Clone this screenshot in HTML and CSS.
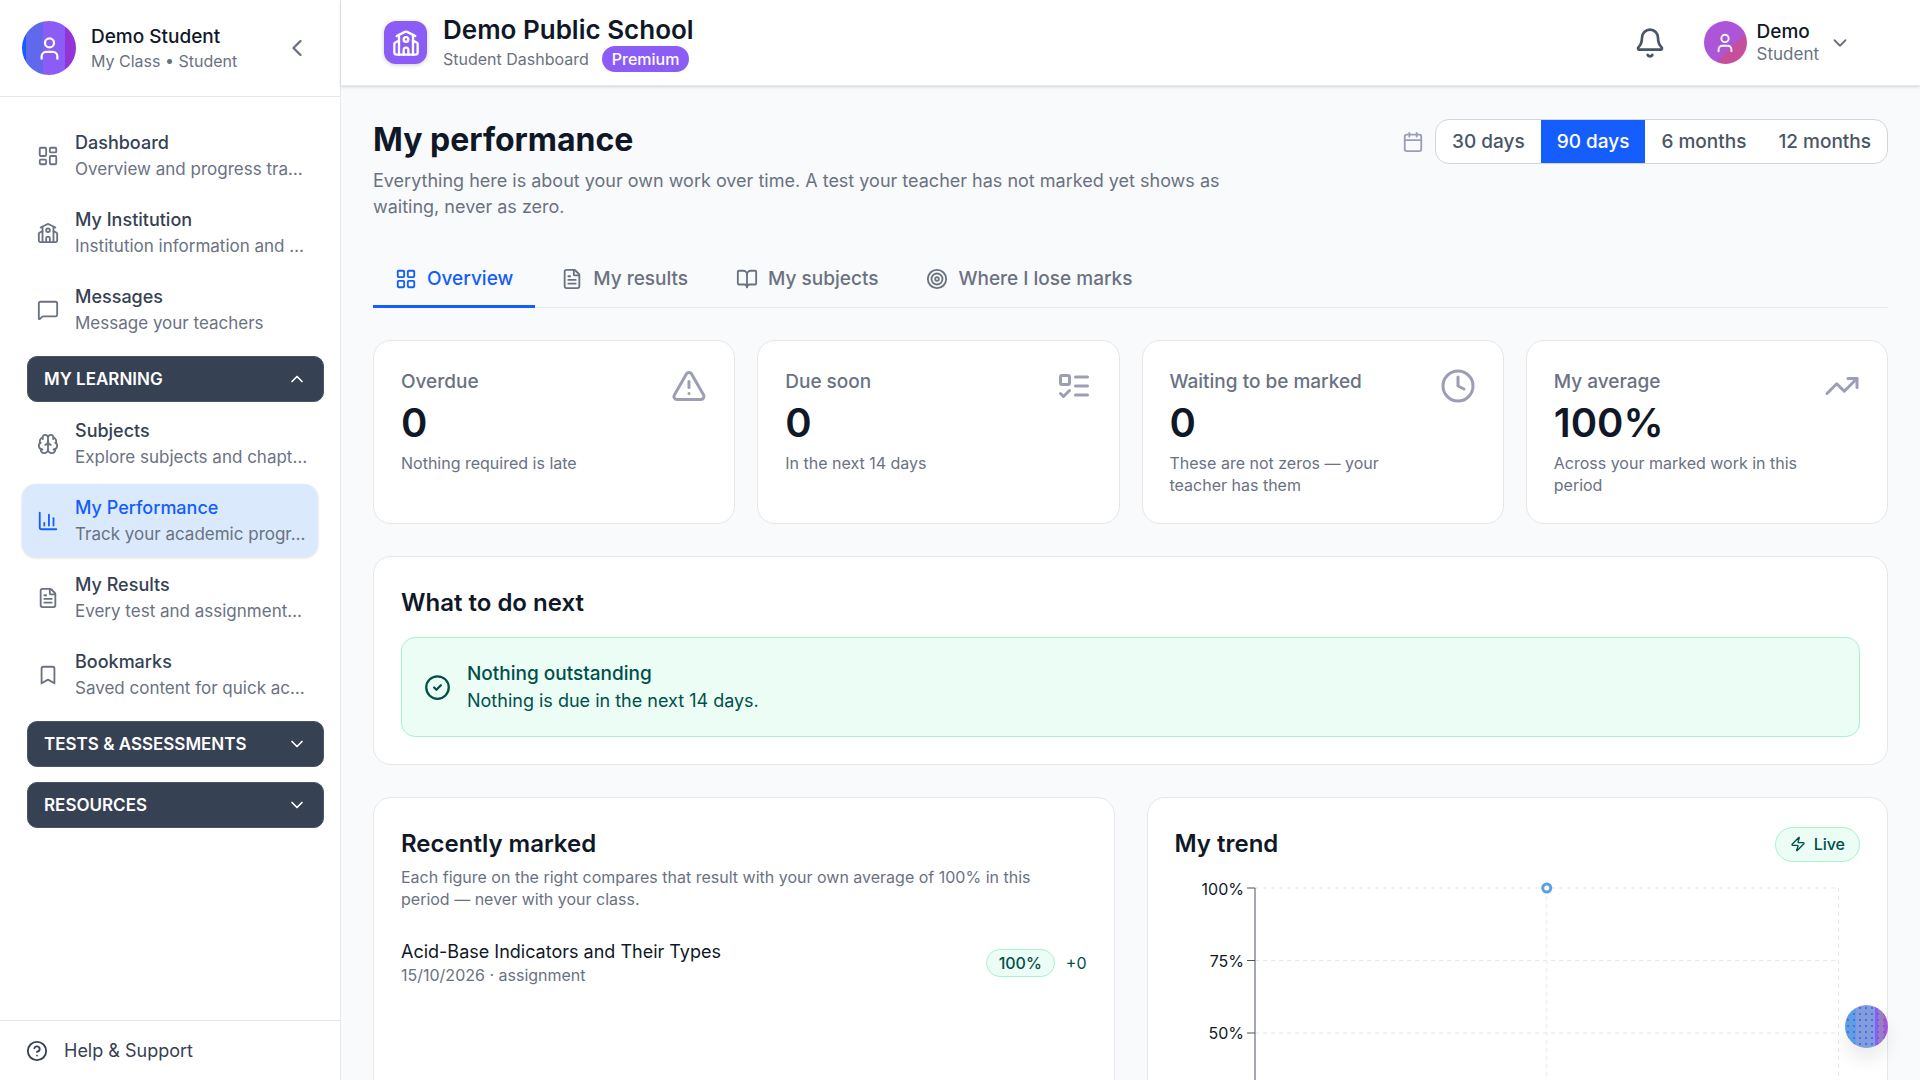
FILE: index.html
```
<!DOCTYPE html>
<html lang="en">

<head>
    <meta charset="UTF-8">
    <meta name="viewport" content="width=device-width, initial-scale=1">
    <title>My performance</title>
    <link rel="stylesheet" href="styles.css">
</head>

<body>

    <!-- icon sprite -->
    <svg class="sprite" aria-hidden="true">
        <symbol id="i-user" viewBox="0 0 24 24"><path d="M19 21v-2a4 4 0 0 0-4-4H9a4 4 0 0 0-4 4v2"/><circle cx="12" cy="7" r="4"/></symbol>
        <symbol id="i-left" viewBox="0 0 24 24"><path d="m15 18-6-6 6-6"/></symbol>
        <symbol id="i-up" viewBox="0 0 24 24"><path d="m18 15-6-6-6 6"/></symbol>
        <symbol id="i-down" viewBox="0 0 24 24"><path d="m6 9 6 6 6-6"/></symbol>
        <symbol id="i-dashboard" viewBox="0 0 24 24"><rect width="7" height="9" x="3" y="3" rx="1"/><rect width="7" height="5" x="14" y="3" rx="1"/><rect width="7" height="9" x="14" y="12" rx="1"/><rect width="7" height="5" x="3" y="16" rx="1"/></symbol>
        <symbol id="i-school" viewBox="0 0 24 24"><path d="M14 22v-4a2 2 0 1 0-4 0v4"/><path d="m18 10 3.447 1.724a1 1 0 0 1 .553.894V20a2 2 0 0 1-2 2H4a2 2 0 0 1-2-2v-7.382a1 1 0 0 1 .553-.894L6 10"/><path d="M18 5v17"/><path d="m4 6 7.106-3.553a2 2 0 0 1 1.788 0L20 6"/><path d="M6 5v17"/><circle cx="12" cy="9" r="2"/></symbol>
        <symbol id="i-message" viewBox="0 0 24 24"><path d="M22 17a2 2 0 0 1-2 2H6.828a2 2 0 0 0-1.414.586l-2.202 2.202A.71.71 0 0 1 2 21.286V5a2 2 0 0 1 2-2h16a2 2 0 0 1 2 2z"/></symbol>
        <symbol id="i-brain" viewBox="0 0 24 24"><path d="M12 18V5"/><path d="M15 13a4.17 4.17 0 0 1-3-4 4.17 4.17 0 0 1-3 4"/><path d="M17.598 6.5A3 3 0 1 0 12 5a3 3 0 1 0-5.598 1.5"/><path d="M17.997 5.125a4 4 0 0 1 2.526 5.77"/><path d="M18 18a4 4 0 0 0 2-7.464"/><path d="M19.967 17.483A4 4 0 1 1 12 18a4 4 0 1 1-7.967-.517"/><path d="M6 18a4 4 0 0 1-2-7.464"/><path d="M6.003 5.125a4 4 0 0 0-2.526 5.77"/></symbol>
        <symbol id="i-chart" viewBox="0 0 24 24"><path d="M3 3v16a2 2 0 0 0 2 2h16"/><path d="M18 17V9"/><path d="M13 17V5"/><path d="M8 17v-3"/></symbol>
        <symbol id="i-file" viewBox="0 0 24 24"><path d="M6 22a2 2 0 0 1-2-2V4a2 2 0 0 1 2-2h8a2.4 2.4 0 0 1 1.704.706l3.588 3.588A2.4 2.4 0 0 1 20 8v12a2 2 0 0 1-2 2z"/><path d="M14 2v5a1 1 0 0 0 1 1h5"/><path d="M10 9H8"/><path d="M16 13H8"/><path d="M16 17H8"/></symbol>
        <symbol id="i-bookmark" viewBox="0 0 24 24"><path d="m19 21-7-4-7 4V5a2 2 0 0 1 2-2h10a2 2 0 0 1 2 2z"/></symbol>
        <symbol id="i-help" viewBox="0 0 24 24"><circle cx="12" cy="12" r="10"/><path d="M9.09 9a3 3 0 0 1 5.83 1c0 2-3 3-3 3"/><path d="M12 17h.01"/></symbol>
        <symbol id="i-bell" viewBox="0 0 24 24"><path d="M10.268 21a2 2 0 0 0 3.464 0"/><path d="M3.262 15.326A1 1 0 0 0 4 17h16a1 1 0 0 0 .74-1.673C19.41 13.956 18 12.499 18 8A6 6 0 0 0 6 8c0 4.499-1.411 5.956-2.738 7.326"/></symbol>
        <symbol id="i-calendar" viewBox="0 0 24 24"><path d="M8 2v4"/><path d="M16 2v4"/><rect width="18" height="18" x="3" y="4" rx="2"/><path d="M3 10h18"/></symbol>
        <symbol id="i-grid" viewBox="0 0 24 24"><rect width="7" height="7" x="3" y="3" rx="1"/><rect width="7" height="7" x="14" y="3" rx="1"/><rect width="7" height="7" x="14" y="14" rx="1"/><rect width="7" height="7" x="3" y="14" rx="1"/></symbol>
        <symbol id="i-book" viewBox="0 0 24 24"><path d="M12 7v14"/><path d="M3 18a1 1 0 0 1-1-1V4a1 1 0 0 1 1-1h5a4 4 0 0 1 4 4 4 4 0 0 1 4-4h5a1 1 0 0 1 1 1v13a1 1 0 0 1-1 1h-6a3 3 0 0 0-3 3 3 3 0 0 0-3-3z"/></symbol>
        <symbol id="i-target" viewBox="0 0 24 24"><circle cx="12" cy="12" r="10"/><circle cx="12" cy="12" r="6"/><circle cx="12" cy="12" r="2"/></symbol>
        <symbol id="i-alert" viewBox="0 0 24 24"><path d="m21.73 18-8-14a2 2 0 0 0-3.48 0l-8 14A2 2 0 0 0 4 21h16a2 2 0 0 0 1.73-3"/><path d="M12 9v4"/><path d="M12 17h.01"/></symbol>
        <symbol id="i-todo" viewBox="0 0 24 24"><rect x="3" y="5" width="6" height="6" rx="1"/><path d="m3 17 2 2 4-4"/><path d="M13 6h8"/><path d="M13 12h8"/><path d="M13 18h8"/></symbol>
        <symbol id="i-clock" viewBox="0 0 24 24"><circle cx="12" cy="12" r="10"/><path d="M12 6v6l4 2"/></symbol>
        <symbol id="i-trend" viewBox="0 0 24 24"><path d="M16 7h6v6"/><path d="m22 7-8.5 8.5-5-5L2 17"/></symbol>
        <symbol id="i-check" viewBox="0 0 24 24"><circle cx="12" cy="12" r="10"/><path d="m9 12 2 2 4-4"/></symbol>
        <symbol id="i-zap" viewBox="0 0 24 24"><path d="M4 14a1 1 0 0 1-.78-1.63l9.9-10.2a.5.5 0 0 1 .86.46l-1.92 6.02A1 1 0 0 0 13 10h7a1 1 0 0 1 .78 1.63l-9.9 10.2a.5.5 0 0 1-.86-.46l1.92-6.02A1 1 0 0 0 11 14z"/></symbol>
    </svg>

    <div class="app">
        <aside class="sidebar">
            <div class="sidebar-head">
                <span class="avatar avatar-lg"><svg class="icon icon-md"><use href="#i-user"/></svg></span>
                <div class="who">
                    <div class="who-name">Demo Student</div>
                    <div class="who-role">My Class • Student</div>
                </div>
                <button class="icon-btn" aria-label="Collapse sidebar"><svg class="icon icon-lg"><use href="#i-left"/></svg></button>
            </div>

            <nav class="nav">
                <a class="nav-item" href="#">
                    <svg class="icon"><use href="#i-dashboard"/></svg>
                    <span class="nav-text"><span class="nav-title">Dashboard</span><span class="nav-desc">Overview and progress tra…</span></span>
                </a>
                <a class="nav-item" href="#">
                    <svg class="icon"><use href="#i-school"/></svg>
                    <span class="nav-text"><span class="nav-title">My Institution</span><span class="nav-desc">Institution information and …</span></span>
                </a>
                <a class="nav-item" href="#">
                    <svg class="icon"><use href="#i-message"/></svg>
                    <span class="nav-text"><span class="nav-title">Messages</span><span class="nav-desc">Message your teachers</span></span>
                </a>

                <button class="nav-section" aria-expanded="true">MY LEARNING <svg class="icon icon-xs"><use href="#i-up"/></svg></button>
                <a class="nav-item" href="#">
                    <svg class="icon"><use href="#i-brain"/></svg>
                    <span class="nav-text"><span class="nav-title">Subjects</span><span class="nav-desc">Explore subjects and chapt…</span></span>
                </a>
                <a class="nav-item active" href="#">
                    <svg class="icon"><use href="#i-chart"/></svg>
                    <span class="nav-text"><span class="nav-title">My Performance</span><span class="nav-desc">Track your academic progr…</span></span>
                </a>
                <a class="nav-item" href="#">
                    <svg class="icon"><use href="#i-file"/></svg>
                    <span class="nav-text"><span class="nav-title">My Results</span><span class="nav-desc">Every test and assignment…</span></span>
                </a>
                <a class="nav-item" href="#">
                    <svg class="icon"><use href="#i-bookmark"/></svg>
                    <span class="nav-text"><span class="nav-title">Bookmarks</span><span class="nav-desc">Saved content for quick ac…</span></span>
                </a>

                <button class="nav-section" aria-expanded="false">TESTS &amp; ASSESSMENTS <svg class="icon icon-xs"><use href="#i-down"/></svg></button>
                <button class="nav-section" aria-expanded="false">RESOURCES <svg class="icon icon-xs"><use href="#i-down"/></svg></button>
            </nav>

            <a class="help" href="#"><svg class="icon"><use href="#i-help"/></svg>Help &amp; Support</a>
        </aside>

        <div class="page">
            <header class="topbar">
                <span class="logo"><svg class="icon icon-lg"><use href="#i-school"/></svg></span>
                <div class="school">
                    <div class="school-name">Demo Public School</div>
                    <div class="school-sub">Student Dashboard <span class="premium">Premium</span></div>
                </div>
                <button class="icon-btn bell" aria-label="Notifications"><svg class="icon icon-xl"><use href="#i-bell"/></svg></button>
                <button class="account">
                    <span class="avatar avatar-sm"><svg class="icon"><use href="#i-user"/></svg></span>
                    <span class="account-text"><span class="account-name">Demo</span><span class="account-role">Student</span></span>
                    <svg class="icon"><use href="#i-down"/></svg>
                </button>
            </header>

            <main class="main">
                <div class="page-head">
                    <div class="intro">
                        <h1>My performance</h1>
                        <p>Everything here is about your own work over time. A test your teacher has not marked yet shows as waiting, never as zero.</p>
                    </div>
                    <div class="period">
                        <svg class="icon"><use href="#i-calendar"/></svg>
                        <div class="segments">
                            <button>30 days</button>
                            <button class="on">90 days</button>
                            <button>6 months</button>
                            <button>12 months</button>
                        </div>
                    </div>
                </div>

                <div class="tabs" role="tablist">
                    <button class="tab on" role="tab" aria-selected="true"><svg class="icon"><use href="#i-grid"/></svg>Overview</button>
                    <button class="tab" role="tab"><svg class="icon"><use href="#i-file"/></svg>My results</button>
                    <button class="tab" role="tab"><svg class="icon"><use href="#i-book"/></svg>My subjects</button>
                    <button class="tab" role="tab"><svg class="icon"><use href="#i-target"/></svg>Where I lose marks</button>
                </div>

                <div class="stats">
                    <div class="card stat">
                        <div>
                            <div class="stat-label">Overdue</div>
                            <div class="stat-value">0</div>
                            <div class="small">Nothing required is late</div>
                        </div>
                        <svg class="icon icon-2xl"><use href="#i-alert"/></svg>
                    </div>
                    <div class="card stat">
                        <div>
                            <div class="stat-label">Due soon</div>
                            <div class="stat-value">0</div>
                            <div class="small">In the next 14 days</div>
                        </div>
                        <svg class="icon icon-2xl"><use href="#i-todo"/></svg>
                    </div>
                    <div class="card stat">
                        <div>
                            <div class="stat-label">Waiting to be marked</div>
                            <div class="stat-value">0</div>
                            <div class="small">These are not zeros — your teacher has them</div>
                        </div>
                        <svg class="icon icon-2xl"><use href="#i-clock"/></svg>
                    </div>
                    <div class="card stat">
                        <div>
                            <div class="stat-label">My average</div>
                            <div class="stat-value">100%</div>
                            <div class="small">Across your marked work in this period</div>
                        </div>
                        <svg class="icon icon-2xl"><use href="#i-trend"/></svg>
                    </div>
                </div>

                <section class="card next">
                    <h2>What to do next</h2>
                    <div class="notice">
                        <svg class="icon icon-md"><use href="#i-check"/></svg>
                        <div>
                            <div class="notice-title">Nothing outstanding</div>
                            <div>Nothing is due in the next 14 days.</div>
                        </div>
                    </div>
                </section>

                <div class="columns">
                    <section class="card">
                        <h2>Recently marked</h2>
                        <p class="small marked-note">Each figure on the right compares that result with your own average of 100% in this period — never with your class.</p>
                        <div class="result">
                            <div class="result-text">
                                <div class="result-title">Acid-Base Indicators and Their Types</div>
                                <div class="small">15/10/2026 · assignment</div>
                            </div>
                            <span class="pill">100%</span>
                            <span class="delta">+0</span>
                        </div>
                    </section>

                    <section class="card">
                        <div class="trend-head">
                            <h2>My trend</h2>
                            <span class="pill live"><svg class="icon icon-2xs"><use href="#i-zap"/></svg>Live</span>
                        </div>
                        <svg class="chart" role="img" aria-label="My trend">
                            <g class="gridlines">
                                <line x1="0" x2="100%" y1="0" y2="0"/>
                                <line x1="0" x2="100%" y1="25%" y2="25%"/>
                                <line x1="0" x2="100%" y1="50%" y2="50%"/>
                                <line x1="0" x2="100%" y1="75%" y2="75%"/>
                                <line x1="50%" x2="50%" y1="0" y2="100%"/>
                                <line x1="100%" x2="100%" y1="0" y2="100%"/>
                            </g>
                            <g class="axis">
                                <line x1="0" x2="0" y1="0" y2="100%"/>
                                <line x1="-8" x2="0" y1="0" y2="0"/>
                                <line x1="-8" x2="0" y1="25%" y2="25%"/>
                                <line x1="-8" x2="0" y1="50%" y2="50%"/>
                                <line x1="-8" x2="0" y1="75%" y2="75%"/>
                                <line x1="-8" x2="100%" y1="100%" y2="100%"/>
                            </g>
                            <g class="ticks">
                                <text x="-11" y="0" dy="7">100%</text>
                                <text x="-11" y="25%" dy="6">75%</text>
                                <text x="-11" y="50%" dy="6">50%</text>
                                <text x="-11" y="75%" dy="6">25%</text>
                                <text x="-11" y="100%" dy="6">0%</text>
                            </g>
                            <circle class="dot" cx="50%" cy="0" r="4"/>
                        </svg>
                    </section>
                </div>
            </main>
        </div>
    </div>

    <button class="fab" aria-label="Assistant"></button>

</body>

</html>
```
FILE: styles.css
```
* {
    box-sizing: border-box;
}

body {
    margin: 0;
    background: #f9fafb;
    color: #101828;
    font-family: Inter, "Liberation Sans", sans-serif;
    font-size: 18px;
    line-height: 26px;
}

h1, h2, p {
    margin: 0;
}

a {
    color: inherit;
    text-decoration: none;
}

button {
    border: 0;
    padding: 0;
    background: none;
    color: inherit;
    font: inherit;
    cursor: pointer;
}

/* icons */
.sprite {
    display: none;
}

.icon {
    flex: none;
    width: 22px;
    height: 22px;
    fill: none;
    stroke: currentColor;
    stroke-width: 2;
    stroke-linecap: round;
    stroke-linejoin: round;
}

.icon-2xs { width: 16px; height: 16px; }
.icon-xs { width: 20px; height: 20px; }
.icon-md { width: 27px; height: 27px; }
.icon-lg { width: 28px; height: 28px; }
.icon-xl { width: 32px; height: 32px; }
.icon-2xl { width: 36px; height: 36px; }

.icon-btn {
    display: flex;
    color: #4a5565;
}

.app {
    display: flex;
    height: 100vh;
}

/* sidebar */
.sidebar {
    flex: none;
    display: flex;
    flex-direction: column;
    width: 341px;
    background: #fff;
    border-right: 1px solid #e5e7eb;
}

.sidebar-head {
    display: flex;
    align-items: center;
    gap: 15px;
    height: 97px;
    padding: 0 29px 0 22px;
    border-bottom: 1px solid #e5e7eb;
}

.sidebar-head .icon-btn {
    color: #6a7282;
}

.avatar {
    flex: none;
    display: flex;
    align-items: center;
    justify-content: center;
    border-radius: 50%;
    color: #fff;
}

.avatar-lg {
    width: 54px;
    height: 54px;
    background: linear-gradient(90deg, #155dfc 7%, #6068ee 7% 39%, #8b5cf6 39% 80%, #9333d8 80%);
}

.avatar-sm {
    width: 43px;
    height: 43px;
    background: linear-gradient(135deg, #8b5cf6 14%, #ad55d8 14% 62%, #c64f9b 62%);
}

.who {
    flex: 1;
    padding-top: 2px;
    line-height: 24px;
}

.who-name {
    font-size: 19px;
    font-weight: 500;
}

.who-role {
    color: #6a7282;
    font-size: 16px;
}

.nav {
    flex: 1;
    display: flex;
    flex-direction: column;
    gap: 4px;
    padding: 22px 16px 0 22px;
}

.nav-item {
    display: flex;
    align-items: center;
    gap: 16px;
    height: 73px;
    margin-right: 6px;
    padding: 0 15px;
    border-radius: 14px;
    color: #6a7282;
}

.nav-text {
    min-width: 0;
}

.nav-title {
    display: block;
    color: #364153;
    font-weight: 500;
}

.nav-desc {
    display: block;
    font-size: 17px;
    white-space: nowrap;
}

.nav-item.active {
    background: #daeafc;
    box-shadow: 0 1px 3px rgba(0, 0, 0, 0.15);
}

.nav-item.active .icon,
.nav-item.active .nav-title {
    color: #155dfc;
}

.nav-section {
    display: flex;
    align-items: center;
    justify-content: space-between;
    height: 46px;
    margin: 6px 0 1px 5px;
    padding: 0 16px;
    border: 1px solid #4a5565;
    border-radius: 10px;
    background: #364153;
    color: #fff;
    font-size: 17px;
    font-weight: 600;
}

.nav-section + .nav-section {
    margin-top: 10px;
}

.help {
    display: flex;
    align-items: center;
    gap: 16px;
    height: 60px;
    padding: 0 26px;
    border-top: 1px solid #e5e7eb;
    color: #364153;
}

/* top bar */
.page {
    flex: 1;
    display: flex;
    flex-direction: column;
    min-width: 0;
}

.topbar {
    flex: none;
    display: flex;
    align-items: center;
    height: 86px;
    padding: 0 69px 0 43px;
    background: #fff;
    border-bottom: 1px solid #e5e7eb;
    box-shadow: 0 1px 3px rgba(0, 0, 0, 0.15);
}

.logo {
    display: flex;
    align-items: center;
    justify-content: center;
    width: 43px;
    height: 43px;
    border-radius: 12px;
    background: #8b5cf6;
    color: #fff;
    box-shadow: 0 1px 4px rgba(0, 0, 0, 0.2);
}

.school {
    flex: 1;
    margin-left: 16px;
}

.school-name {
    font-size: 26px;
    font-weight: 600;
    line-height: 32px;
}

.school-sub {
    display: flex;
    align-items: center;
    gap: 13px;
    color: #6a7282;
    font-size: 16px;
}

.premium {
    padding: 0 10px;
    border-radius: 13px;
    background: #8b5cf6;
    color: #fff;
    font-weight: 500;
}

.bell {
    margin-right: 38px;
}

.account {
    display: flex;
    align-items: center;
    gap: 10px;
    color: #6a7282;
    text-align: left;
    line-height: 22px;
}

.account-name {
    display: block;
    color: #101828;
    font-size: 19px;
    font-weight: 500;
}

.account-role {
    display: block;
    font-size: 17px;
}

/* content */
.main {
    flex: 1;
    overflow-y: auto;
    scrollbar-width: none;
    padding: 33px 32px;
}

h1 {
    font-size: 32px;
    font-weight: 700;
    line-height: 42px;
}

h2 {
    font-size: 24px;
    font-weight: 600;
    line-height: 38px;
}

.page-head {
    display: flex;
    align-items: flex-start;
    justify-content: space-between;
}

.intro p {
    max-width: 900px;
    margin-top: 7px;
    color: #6a7282;
}

.period {
    display: flex;
    align-items: center;
    gap: 11px;
    color: #9b9eb4;
}

.segments {
    display: flex;
    overflow: hidden;
    border: 1px solid #d1d5dc;
    border-radius: 14px;
    background: #fff;
    color: #4a5565;
}

.segments button {
    height: 43px;
    padding: 0 16px;
    font-size: 19px;
    font-weight: 500;
}

.segments .on {
    background: #155dfc;
    color: #fff;
}

.tabs {
    display: flex;
    gap: 4px;
    margin-top: 30px;
    border-bottom: 1px solid #e5e7eb;
}

.tab {
    display: flex;
    align-items: center;
    gap: 10px;
    height: 58px;
    margin-bottom: -1px;
    padding: 2px 22px 0;
    border-bottom: 3px solid transparent;
    color: #6a7282;
    font-size: 19px;
    font-weight: 500;
}

.tab.on {
    border-color: #155dfc;
    color: #155dfc;
}

.card {
    padding: 27px;
    border: 1px solid #e5e7eb;
    border-radius: 18px;
    background: #fff;
}

.small {
    color: #6a7282;
    font-size: 16px;
    line-height: 22px;
}

.stats {
    display: grid;
    grid-template-columns: repeat(4, 1fr);
    gap: 22px;
    margin-top: 32px;
}

.stat {
    display: flex;
    justify-content: space-between;
    gap: 16px;
}

.stat .icon {
    color: #9b9eb4;
}

.stat-label {
    color: #6a7282;
    font-size: 19px;
    font-weight: 500;
    line-height: 28px;
}

.stat-value {
    margin: 4px 0 6px;
    font-size: 40px;
    font-weight: 600;
    line-height: 46px;
}

.next {
    margin-top: 32px;
}

.notice {
    display: flex;
    align-items: center;
    gap: 16px;
    margin-top: 15px;
    padding: 22px;
    border: 1px solid #a4f4cf;
    border-radius: 14px;
    background: #ecfdf5;
    color: #004f4b;
    line-height: 27px;
}

.notice-title {
    font-size: 19px;
    font-weight: 500;
}

.columns {
    display: grid;
    grid-template-columns: 1fr 1fr;
    gap: 32px;
    margin-top: 32px;
}

.marked-note {
    max-width: 670px;
    margin-top: 3px;
}

.result {
    display: flex;
    align-items: center;
    gap: 11px;
    margin-top: 30px;
}

.result-text {
    flex: 1;
}

.result-title {
    line-height: 24px;
}

.pill {
    padding: 0 12px;
    border: 1px solid #a4f4cf;
    border-radius: 18px;
    background: #ecfdf5;
    color: #004f4b;
    font-size: 16px;
    font-weight: 500;
}

.delta {
    color: #004f4b;
    font-size: 16px;
}

.trend-head {
    display: flex;
    align-items: center;
    justify-content: space-between;
}

.live {
    display: flex;
    align-items: center;
    gap: 8px;
    height: 35px;
    padding: 0 14px;
}

/* plot area, tick labels hang into the left margin */
.chart {
    display: block;
    width: calc(100% - 102px);
    height: 290px;
    margin: 25px 22px 40px 80px;
    overflow: visible;
}

.gridlines line {
    stroke: #e5e7eb;
    stroke-dasharray: 4 4;
}

.axis line {
    stroke: #4a5565;
}

.ticks text {
    fill: #101828;
    font-size: 16px;
    text-anchor: end;
}

.dot {
    fill: #fff;
    stroke: #5ba0e0;
    stroke-width: 3;
}

.fab {
    position: fixed;
    right: 32px;
    bottom: 32px;
    width: 43px;
    height: 43px;
    border-radius: 50%;
    background:
        radial-gradient(circle, #6d5cf0 1px, transparent 1px) 0 0 / 6px 6px,
        linear-gradient(90deg, #5ba0e0 25%, #7f9fdc 25% 70%, #8b5cf6 70% 76%, #9a7fc0 76% 90%, #a855d8 90%);
    box-shadow: 0 12px 18px rgba(0, 0, 0, 0.08);
}
```
